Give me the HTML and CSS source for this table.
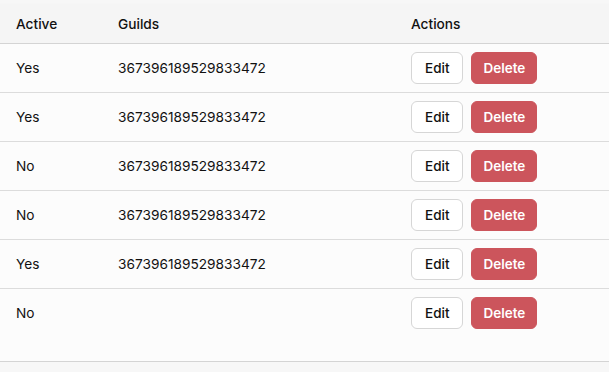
FILE: index.html
```html
<!DOCTYPE html>
<html lang="en">
<head>
    <meta charset="UTF-8">
    <title>Guilds</title>
    <link rel="stylesheet" href="styles.css">
</head>
<body>
    <div class="card">
        <table class="guilds">
            <thead>
                <tr>
                    <th class="col-active">Active</th>
                    <th class="col-guild">Guilds</th>
                    <th>Actions</th>
                </tr>
            </thead>
            <tbody>
                <tr><td>Yes</td><td>367396189529833472</td><td><button class="btn">Edit</button><button class="btn danger">Delete</button></td></tr>
                <tr><td>Yes</td><td>367396189529833472</td><td><button class="btn">Edit</button><button class="btn danger">Delete</button></td></tr>
                <tr><td>No</td><td>367396189529833472</td><td><button class="btn">Edit</button><button class="btn danger">Delete</button></td></tr>
                <tr><td>No</td><td>367396189529833472</td><td><button class="btn">Edit</button><button class="btn danger">Delete</button></td></tr>
                <tr><td>Yes</td><td>367396189529833472</td><td><button class="btn">Edit</button><button class="btn danger">Delete</button></td></tr>
                <tr><td>No</td><td></td><td><button class="btn">Edit</button><button class="btn danger">Delete</button></td></tr>
            </tbody>
        </table>
    </div>
</body>
</html>
```

FILE: styles.css
```css
body {
    margin: 0;
    padding-top: 4px;
    background: #f7f7f7;
    font-family: Inter, "Noto Sans", sans-serif;
    font-size: 13.7px;
    color: #111;
}

.card {
    background: #fcfcfc;
    padding-bottom: 24px;
    border-bottom: 1px solid #d4d4d4;
    box-shadow: 0 1px 2px rgba(0, 0, 0, 0.08);
}

.guilds {
    width: 100%;
    border-collapse: collapse;
}

.guilds th {
    background: #f5f5f5;
    font-weight: 500;
    text-align: left;
    height: 39px;
    padding: 0 16px;
    border-bottom: 1px solid #d4d4d4;
}

.guilds td {
    height: 48px;
    padding: 0 16px;
    border-bottom: 1px solid #dcdcdc;
}

.guilds tbody tr:last-child td {
    border-bottom: none;
}

.col-active {
    width: 70px;
}

.col-guild {
    width: 261px;
}

.btn {
    height: 32px;
    padding: 0 13px;
    margin-right: 8px;
    border: 1px solid #d6d6d6;
    border-radius: 6px;
    background: #fff;
    font-family: inherit;
    font-size: 13.5px;
    font-weight: 500;
    color: #111;
    vertical-align: middle;
}

.btn.danger {
    padding: 0 11px;
    background: #cc555c;
    border-color: #cc555c;
    color: #fff;
    font-weight: 600;
}
```
